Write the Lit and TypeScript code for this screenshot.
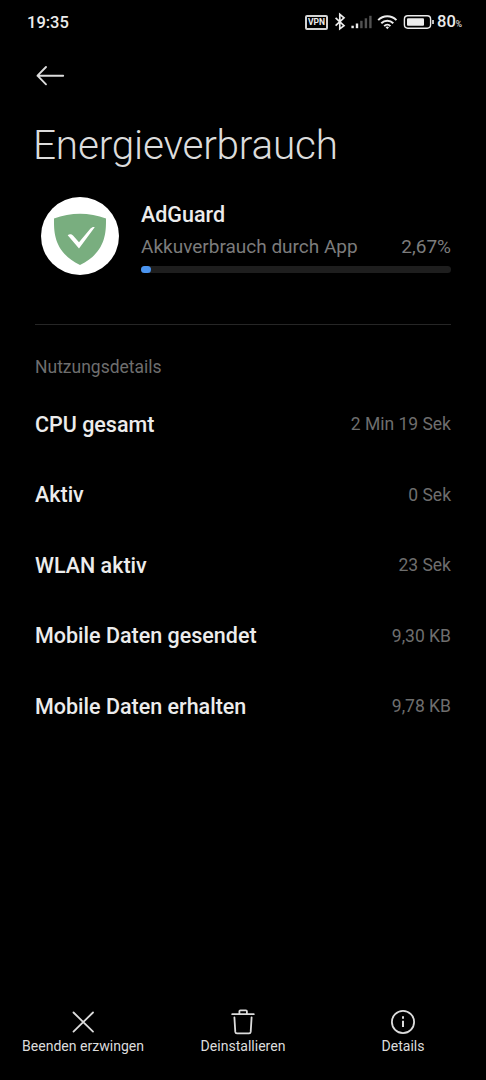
import { LitElement, html, css, svg } from "lit";
import { customElement } from "lit/decorators.js";

@customElement("status-bar")
class StatusBar extends LitElement {
  static styles = css`
    :host {
      display: flex;
      align-items: center;
      justify-content: space-between;
      height: 44px;
      padding: 0 24px 0 27px;
      color: #ececec;
      font-weight: 500;
    }
    .time { font-size: 16.5px; line-height: 20px; padding-top: 1px; }
    .icons { display: block; }
    .right { display: flex; align-items: center; }
    .level { font-size: 16.5px; line-height: 20px; margin-left: 3px; padding-top: 2px; }
    .unit { font-size: 8.5px; font-weight: 400; }
    .vpn {
      box-sizing: border-box;
      width: 23px;
      height: 15px;
      border: 2px solid #d4d4d4;
      border-radius: 2px;
      font-size: 8.5px;
      line-height: 11.5px;
      font-weight: 700;
      text-align: center;
    }
  `;
  render() {
    return html`
      <span class="time">19:35</span>
      <div class="right">
        <div class="vpn">VPN</div>
        <svg class="icons" width="106" height="24" viewBox="328 9.500 106 24">
          <path d="M335.6 17.300L344 25.200L339.8 28.400V13.900L344 17.300L335.6 25.200" fill="none" stroke="#ececec" stroke-width="1.7" />
          <g fill="#ececec">
            <rect x="351.4" y="25.2" width="2.4" height="2.5" />
            <rect x="355.8" y="23" width="2.4" height="4.7" />
            <g fill="#525252">
              <rect x="360.2" y="20.3" width="2.4" height="7.4" />
              <rect x="364.7" y="17.8" width="2.4" height="9.9" />
              <rect x="369.2" y="15.3" width="2.4" height="12.4" />
            </g>
          </g>
          <g fill="none" stroke="#ececec" stroke-width="2">
            <path d="M378.2 19.6a12.8 12.8 0 0 1 18.2 0" />
            <path d="M381.3 22.7a8.5 8.5 0 0 1 12 0" />
            <path d="M384.2 25.6a4.4 4.4 0 0 1 6.2 0" />
          </g>
          <path d="M385.6 26.8a2.5 2.5 0 0 1 3.4 0l-1.7 1.9z" fill="#ececec" />
          <rect x="404.4" y="15.3" width="26.2" height="12.4" rx="3.4" fill="none" stroke="#ececec" stroke-width="1.4" />
          <rect x="407" y="17.7" width="17" height="7.6" rx="1" fill="#ececec" />
          <rect x="432.2" y="19.5" width="1.6" height="4" fill="#ececec" />
        </svg>
        <span class="level">80<span class="unit">%</span></span>
      </div>
    `;
  }
}

@customElement("usage-row")
class UsageRow extends LitElement {
  static properties = { label: {}, value: {} };
  declare label: string;
  declare value: string;
  static styles = css`
    :host {
      display: flex;
      align-items: center;
      justify-content: space-between;
      height: 70.5px;
    }
    .label { color: #ececec; font-size: 21.5px; font-weight: 500; }
    .value { color: #6e6e6e; font-size: 17.5px; }
  `;
  render() {
    return html`<span class="label">${this.label}</span><span class="value">${this.value}</span>`;
  }
}

const closeIcon = svg`<path d="M73.5 1012.5L93 1031.6M93 1012.5L73.5 1031.6" transform="translate(-69 -1008)" />`;
const trashIcon = svg`<path d="M3.2 6.2H24.8M10.400 6V3.3Q10.400 2.3 11.400 2.3H16.900Q17.900 2.3 17.900 3.3V6M5.400 9.400L6.300 23.900Q6.500 25.300 7.900 25.300H20.100Q21.500 25.300 21.700 23.900L22.600 9.400" />`;
const infoIcon = svg`<circle cx="14" cy="14" r="11.1" /><path d="M14 12.7V19M14 8.3V10.700" stroke-width="2" stroke-linecap="butt" />`;

@customElement("app-root")
class AppRoot extends LitElement {
  static styles = css`
    :host {
      display: flex;
      flex-direction: column;
      box-sizing: border-box;
      height: 1080px;
      background: #000;
      color: #ececec;
      font-family: Roboto, sans-serif;
      overflow: hidden;
      white-space: nowrap;
    }
    .back { display: block; margin: 20px 0 0 34px; }
    h1 {
      margin: 33px 0 0 33px;
      font-size: 40.5px;
      letter-spacing: -0.2px;
      line-height: 48px;
      font-weight: 300;
      color: #dcdcdc;
    }
    .app { display: flex; margin: 28px 35px 0 41px; height: 78px; }
    .logo { flex: none; }
    .info { flex: 1; margin-left: 22px; padding-top: 3px; }
    .name { font-size: 21.5px; line-height: 30px; font-weight: 500; }
    .usage {
      display: flex;
      justify-content: space-between;
      font-size: 19px;
      line-height: 24px;
      margin-top: 5px;
      color: #7c7c7c;
    }
    .track { height: 7px; margin-top: 7px; border-radius: 4px; background: #1e1e1e; }
    .fill { height: 7px; width: 10px; border-radius: 4px; background: #4a94f0; }
    .details { margin: 49px 35px 0; border-top: 1px solid #262626; }
    .heading {
      margin-top: 30px;
      height: 24px;
      line-height: 24px;
      font-size: 17.5px;
      color: #6e6e6e;
      margin-bottom: 10px;
    }
    nav { display: grid; grid-template-columns: 166px 154px 166px; margin-top: auto; height: 72px; }
    .action { display: flex; flex-direction: column; align-items: center; font-size: 14.05px; line-height: 20px; color: #dcdcdc; }
    .action svg { fill: none; stroke: #dcdcdc; stroke-width: 1.8; stroke-linecap: round; }
  `;
  render() {
    const rows = [
      ["CPU gesamt", "2 Min 19 Sek"],
      ["Aktiv", "0 Sek"],
      ["WLAN aktiv", "23 Sek"],
      ["Mobile Daten gesendet", "9,30 KB"],
      ["Mobile Daten erhalten", "9,78 KB"],
    ];
    const actions = [
      [closeIcon, "Beenden erzwingen"],
      [trashIcon, "Deinstallieren"],
      [infoIcon, "Details"],
    ];
    return html`
      <status-bar></status-bar>
      <svg class="back" width="32" height="24" viewBox="34 64 32 24" fill="none" stroke="#dcdcdc" stroke-width="1.9" stroke-linecap="round" stroke-linejoin="round">
        <path d="M46 67L37.5 75.7L46 84.3M37.5 75.7H63.2" />
      </svg>
      <h1>Energieverbrauch</h1>
      <div class="app">
        <svg class="logo" width="78" height="78" viewBox="41 197 78 78">
          <circle cx="80" cy="236" r="39" fill="#fff" />
          <path d="M80 213.8C88.5 213.8 98 215.4 106 218.6C106 232 106.500 252 80 265C53.500 252 54 232 54 218.600C62 215.400 71.500 213.800 80 213.800Z" fill="#79ae7f" />
          <path d="M67.700 235.200C69.500 233.700 71.700 234.200 73 235.600L79 242.200L90.500 228.500C91.800 227.200 93.500 226.600 94.700 227.200L79 248.500Z" fill="#fff" />
        </svg>
        <div class="info">
          <div class="name">AdGuard</div>
          <div class="usage"><span>Akkuverbrauch durch App</span><span>2,67%</span></div>
          <div class="track"><div class="fill"></div></div>
        </div>
      </div>
      <div class="details">
        <div class="heading">Nutzungsdetails</div>
        ${rows.map(([l, v]) => html`<usage-row .label=${l} .value=${v}></usage-row>`)}
      </div>
      <nav>
        ${actions.map(([icon, text]) => html`<div class="action"><svg width="28" height="28" viewBox="0 0 28 28">${icon}</svg><span>${text}</span></div>`)}
      </nav>
    `;
  }
}
